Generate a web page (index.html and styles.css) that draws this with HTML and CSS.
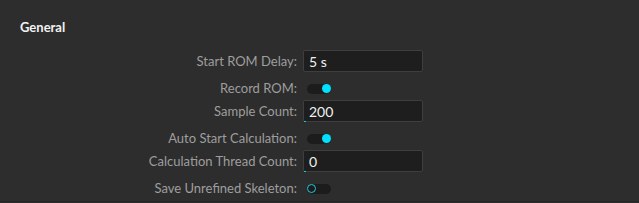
FILE: index.html
```html
<!DOCTYPE html>
<html lang="en">
<head>
    <meta charset="UTF-8">
    <title>Settings</title>
    <link rel="stylesheet" href="styles.css">
</head>
<body>
    <div class="panel">
        <h3 class="section-title">General</h3>
        <div class="form">
            <div class="row">
                <label class="label" for="rom-delay">Start ROM Delay:</label>
                <input class="field" type="text" id="rom-delay" value="5 s">
            </div>
            <div class="row row-toggle">
                <span class="label">Record ROM:</span>
                <span class="toggle on"><span class="knob"></span></span>
            </div>
            <div class="row">
                <label class="label" for="sample-count">Sample Count:</label>
                <span class="field-wrap"><input class="field" type="text" id="sample-count" value="200"></span>
            </div>
            <div class="row row-toggle">
                <span class="label">Auto Start Calculation:</span>
                <span class="toggle on"><span class="knob"></span></span>
            </div>
            <div class="row">
                <label class="label" for="thread-count">Calculation Thread Count:</label>
                <span class="field-wrap"><input class="field" type="text" id="thread-count" value="0"></span>
            </div>
            <div class="row row-toggle">
                <span class="label">Save Unrefined Skeleton:</span>
                <span class="toggle"><span class="knob"></span></span>
            </div>
        </div>
    </div>
</body>
</html>
```

FILE: styles.css
```css
body {
    margin: 0;
    background: #2d2d2d;
    font-family: Lato, "Open Sans", sans-serif;
}
.panel {
    height: 201px;
    border-bottom: 1px solid #262626;
    padding: 0 0 0 20px;
}
.section-title {
    margin: 0;
    padding-top: 19px;
    height: 35px;
    box-sizing: border-box;
    font-size: 13px;
    font-weight: bold;
    color: #f2f2f2;
}
.form {
    padding-top: 15px;
}
.row {
    display: flex;
    align-items: center;
    height: 22px;
}
.row-toggle {
    height: 28px;
    padding-top: 3px;
    box-sizing: border-box;
}
.label {
    width: 283px;
    text-align: right;
    padding-right: 6px;
    box-sizing: border-box;
    font-size: 13px;
    color: #9e9e9e;
}
.field-wrap {
    position: relative;
    display: flex;
}
.field-wrap::after {
    content: "";
    position: absolute;
    left: 1px;
    bottom: 0;
    width: 2px;
    height: 1px;
    background: #16c8e0;
}
.field {
    width: 120px;
    height: 22px;
    box-sizing: border-box;
    margin: 0;
    padding: 0 5px;
    background: #1e1e1e;
    border: 1px solid #3e3e3e;
    border-radius: 2px;
    color: #f0f0f0;
    font-family: Lato, "Open Sans", sans-serif;
    font-size: 14px;
    outline: none;
}
.toggle {
    position: relative;
    width: 24px;
    height: 10px;
    margin: 2px 0 0 4px;
    border-radius: 5px;
    background: #1c1c1c;
}
.knob {
    position: absolute;
    top: 0.5px;
    left: 0;
    width: 9px;
    height: 9px;
    box-sizing: border-box;
    border-radius: 50%;
    border: 1.3px solid #1fc8df;
}
.toggle.on .knob {
    left: 15px;
    border: none;
    background: #00e1ff;
}
```
